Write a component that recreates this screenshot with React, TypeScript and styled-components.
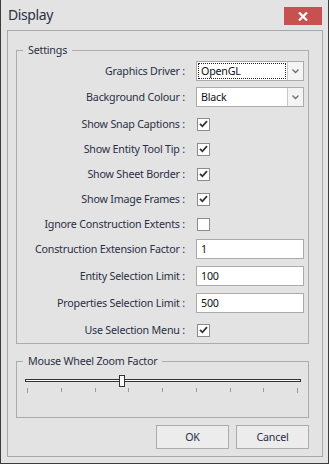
import * as React from "react"
import styled, { createGlobalStyle } from "styled-components"

const Global = createGlobalStyle`
  html, body {
    margin: 0;
    padding: 0;
    background: #e3e3e3;
  }
  * {
    box-sizing: border-box;
  }
`

const Window = styled.div`
  width: 329px;
  height: 464px;
  display: flex;
  flex-direction: column;
  background: #e3e3e3;
  border: 1px solid #3c3c3c;
  border-top: none;
  font-family: "Noto Sans", "Open Sans", sans-serif;
  font-size: 10.7px;
  letter-spacing: -0.2px;
  color: #2a2f45;
`

const TitleBar = styled.div`
  height: 30px;
  display: flex;
  align-items: flex-start;
  justify-content: space-between;
  padding: 0 6px 0 7px;
`

const Title = styled.div`
  font-size: 14px;
  letter-spacing: -0.4px;
  line-height: 18px;
  margin-top: 6px;
  color: #2a2f45;
`

const CloseButton = styled.div`
  width: 38px;
  height: 18px;
  margin-top: 7px;
  background: #c75050;
  display: flex;
  align-items: center;
  justify-content: center;
`

const Panel = styled.div`
  flex: 1;
  margin: 0 5px 6px 6px;
  border: 1px solid #a8a8a8;
  display: flex;
  flex-direction: column;
  padding: 0 13px 0 8px;
`

const GroupBox = styled.div<{ $top: number; $height: number }>`
  position: relative;
  margin-top: ${(p) => p.$top}px;
  height: ${(p) => p.$height}px;
  border: 1px solid #acacac;
`

const Caption = styled.div`
  position: absolute;
  top: -9px;
  left: 6px;
  padding: 0 5px;
  line-height: 16px;
  background: #e3e3e3;
`

const Rows = styled.div`
  display: flex;
  flex-direction: column;
  padding-top: 10px;
`

const Row = styled.div<{ $gap: number }>`
  display: grid;
  grid-template-columns: 168px 108px;
  column-gap: 11px;
  align-items: center;
  height: 20px;
  margin-top: ${(p) => p.$gap}px;
`

const Label = styled.div`
  text-align: right;
  white-space: nowrap;
  line-height: 16px;
`

const Combo = styled.div`
  height: 20px;
  display: flex;
  background: #fff;
  border: 1px solid #ababab;
`

const ComboText = styled.div<{ $focus: boolean }>`
  flex: 1;
  margin: 1px;
  padding-left: 2px;
  line-height: 15px;
  color: #111;
  border: 1px dotted ${(p) => (p.$focus ? "#222" : "transparent")};
`

const ComboArrow = styled.div`
  width: 16px;
  border-left: 1px solid #c6c6c6;
  background: #f4f4f4;
  display: flex;
  align-items: center;
  justify-content: center;
`

const TextBox = styled.div`
  height: 20px;
  background: #fff;
  border: 1px solid #ababab;
  padding-left: 4px;
  line-height: 18px;
  color: #111;
`

const CheckBox = styled.div`
  width: 13px;
  height: 13px;
  margin-left: 1px;
  background: #fff;
  border: 1px solid #8c8c8c;
  display: flex;
  align-items: center;
  justify-content: center;
`

const Slider = styled.div`
  margin: 17px 7px 0 8px;
`

const Track = styled.div`
  position: relative;
  height: 3px;
  border: 1px solid #333;
  background: #fafafa;
`

const Thumb = styled.div`
  position: absolute;
  top: -5px;
  width: 6px;
  height: 12px;
  border: 1px solid #333;
  background: #fafafa;
`

const Ticks = styled.div`
  display: flex;
  justify-content: space-between;
  align-items: flex-start;
  padding: 0 3px 0 2px;
  margin-top: 6px;
`

const Tick = styled.div<{ $long: boolean }>`
  width: 1px;
  height: ${(p) => (p.$long ? 5 : 4)}px;
  background: #9a9a9a;
`

const Buttons = styled.div`
  display: flex;
  justify-content: flex-end;
  gap: 7px;
  margin-top: 7px;
`

const Button = styled.div`
  width: 73px;
  height: 24px;
  border: 1px solid #acacac;
  background: #ececec;
  display: flex;
  align-items: center;
  justify-content: center;
  color: #2a2f45;
`

type Field =
  | { label: string; kind: "combo"; value: string; focus?: boolean; gap: number }
  | { label: string; kind: "check"; checked: boolean; gap: number }
  | { label: string; kind: "text"; value: string; gap: number }

const fields: Field[] = [
  { label: "Graphics Driver", kind: "combo", value: "OpenGL", focus: true, gap: 0 },
  { label: "Background Colour", kind: "combo", value: "Black", gap: 6 },
  { label: "Show Snap Captions", kind: "check", checked: true, gap: 7 },
  { label: "Show Entity Tool Tip", kind: "check", checked: true, gap: 5 },
  { label: "Show Sheet Border", kind: "check", checked: true, gap: 5 },
  { label: "Show Image Frames", kind: "check", checked: true, gap: 5 },
  { label: "Ignore Construction Extents", kind: "check", checked: false, gap: 5 },
  { label: "Construction Extension Factor", kind: "text", value: "1", gap: 5 },
  { label: "Entity Selection Limit", kind: "text", value: "100", gap: 7 },
  { label: "Properties Selection Limit", kind: "text", value: "500", gap: 7 },
  { label: "Use Selection Menu", kind: "check", checked: true, gap: 7 },
]

const Chevron = () => (
  <svg width="7" height="5" viewBox="0 0 7 5">
    <polyline points="0.5,0.5 3.5,3.5 6.5,0.5" fill="none" stroke="#6e6e6e" strokeWidth="1.3" />
  </svg>
)

const Check = () => (
  <svg width="9" height="8" viewBox="0 0 9 8">
    <polyline points="1,3.8 3.4,6.3 8,1.2" fill="none" stroke="#333" strokeWidth="1.8" />
  </svg>
)

const Control = ({ f }: { f: Field }) => {
  if (f.kind === "combo")
    return (
      <Combo>
        <ComboText $focus={!!f.focus}>{f.value}</ComboText>
        <ComboArrow>
          <Chevron />
        </ComboArrow>
      </Combo>
    )
  if (f.kind === "text") return <TextBox>{f.value}</TextBox>
  return <CheckBox>{f.checked && <Check />}</CheckBox>
}

export default function App() {
  return (
    <>
      <Global />
      <Window>
        <TitleBar>
          <Title>Display</Title>
          <CloseButton>
            <svg width="10" height="9" viewBox="0 0 10 9">
              <path d="M1 0.5 L9 8.5 M9 0.5 L1 8.5" stroke="#fff" strokeWidth="2.2" />
            </svg>
          </CloseButton>
        </TitleBar>
        <Panel>
          <GroupBox $top={19} $height={294}>
            <Caption>Settings</Caption>
            <Rows>
              {fields.map((f) => (
                <Row key={f.label} $gap={f.gap}>
                  <Label>{f.label} :</Label>
                  <Control f={f} />
                </Row>
              ))}
            </Rows>
          </GroupBox>
          <GroupBox $top={17} $height={57}>
            <Caption>Mouse Wheel Zoom Factor</Caption>
            <Slider>
              <Track>
                <Thumb style={{ left: 93 }} />
              </Track>
              <Ticks>
                {Array.from({ length: 9 }).map((_, i) => (
                  <Tick key={i} $long={i === 0 || i === 8} />
                ))}
              </Ticks>
            </Slider>
          </GroupBox>
          <Buttons>
            <Button>OK</Button>
            <Button>Cancel</Button>
          </Buttons>
        </Panel>
      </Window>
    </>
  )
}
